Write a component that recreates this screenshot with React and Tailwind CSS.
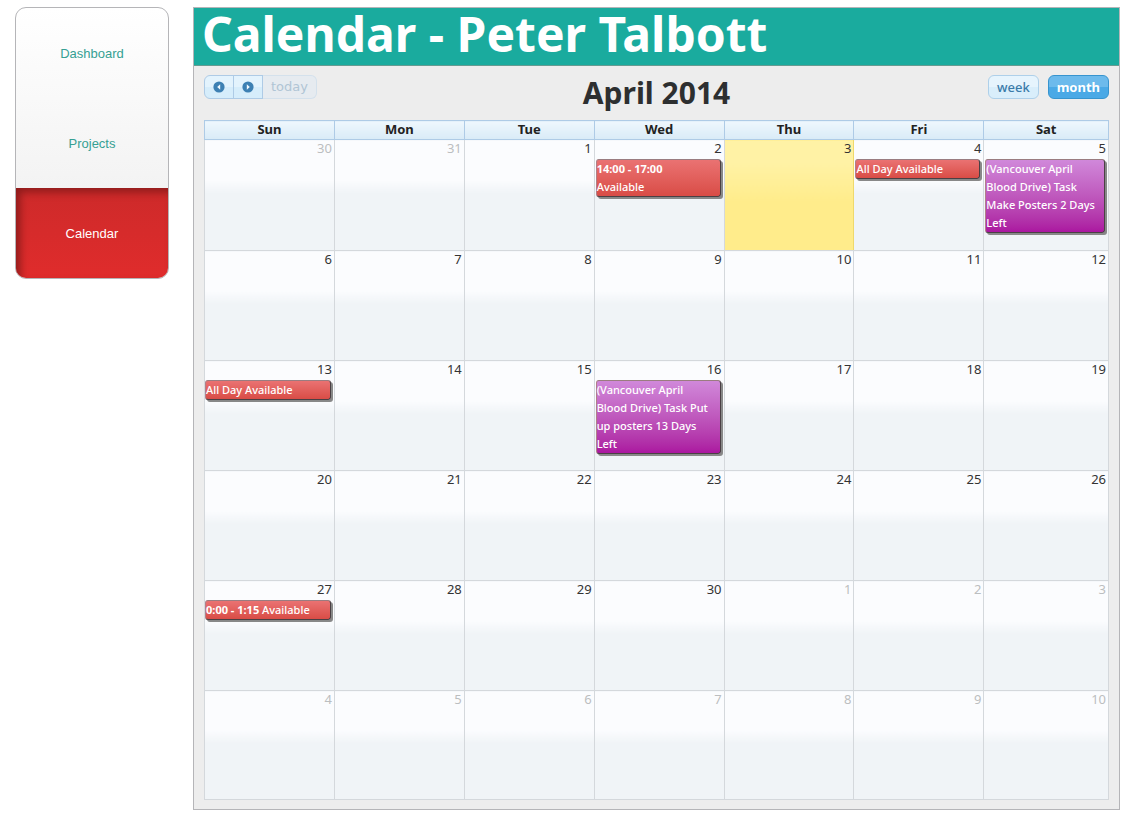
import { Fragment } from 'react';

const days = ['Sun', 'Mon', 'Tue', 'Wed', 'Thu', 'Fri', 'Sat'];

const weeks = [
  [30, 31, 1, 2, 3, 4, 5],
  [6, 7, 8, 9, 10, 11, 12],
  [13, 14, 15, 16, 17, 18, 19],
  [20, 21, 22, 23, 24, 25, 26],
  [27, 28, 29, 30, 1, 2, 3],
  [4, 5, 6, 7, 8, 9, 10],
];

const events = {
  '0-3': { kind: 'available', time: '14:00 - 17:00', lines: ['', 'Available'] },
  '0-5': { kind: 'available', lines: ['All Day Available'] },
  '0-6': { kind: 'task', lines: ['(Vancouver April', 'Blood Drive) Task', 'Make Posters 2 Days', 'Left'] },
  '2-0': { kind: 'available', lines: ['All Day Available'] },
  '2-3': { kind: 'task', lines: ['(Vancouver April', 'Blood Drive) Task Put', 'up posters 13 Days', 'Left'] },
  '4-0': { kind: 'available', time: '0:00 - 1:15', lines: ['Available'] },
};

const eventColors = {
  available: 'from-[#ea7272] to-[#d94c46]',
  task: 'from-[#d088da] to-[#ab16a0]',
};

function isOtherMonth(week, day) {
  return (week === 0 && day > 20) || (week > 3 && day < 20);
}

function NavLink({ label, active }) {
  return (
    <a
      href="#"
      aria-current={active ? 'page' : undefined}
      className={
        active
          ? 'flex h-[90px] items-center justify-center bg-linear-to-b from-[#cd2a2a] to-[#e02c2c] pt-[2px] text-white shadow-[inset_5px_5px_8px_-1px_#8c1b1b]'
          : 'flex h-[90px] items-center justify-center pt-[2px] text-[#36a093]'
      }
    >
      {label}
    </a>
  );
}

function CircleArrow({ left }) {
  return (
    <svg viewBox="0 0 12 12" className="size-3" aria-hidden="true">
      <circle cx="6" cy="6" r="5.6" fill="#3d80b3" />
      <path d={left ? 'M7.2 3.2 L4.2 6 L7.2 8.8 Z' : 'M4.8 3.2 L7.8 6 L4.8 8.8 Z'} fill="#f2f9ff" />
    </svg>
  );
}

function EventCard({ event, firstColumn }) {
  return (
    <div
      className={`mr-[3px] rounded-[3px] border border-t-[#9a7c80] border-l-[#b08088] border-r-[#4a4044] border-b-[#4a4044] bg-linear-to-b text-left text-[11px] leading-[18px] font-medium text-white shadow-[2px_2px_0_#888] ${eventColors[event.kind]} ${firstColumn ? '' : 'ml-px'}`}
    >
      {event.time && <span className="font-bold">{event.time} </span>}
      {event.lines.map((line, i) => (
        <Fragment key={i}>
          {i > 0 && <br />}
          {line}
        </Fragment>
      ))}
    </div>
  );
}

export default function App() {
  return (
    <div className="flex items-start gap-6 bg-white pt-[7px] pr-[22px] pb-[9px] pl-[15px] font-['Noto_Sans',sans-serif]">
      <nav className="w-[154px] shrink-0 overflow-hidden rounded-[11px] border border-[#b5b5b8] bg-linear-to-b from-white to-[#f3f3f3] to-67% font-['Liberation_Sans',sans-serif] text-[13px]">
        <NavLink label="Dashboard" />
        <NavLink label="Projects" />
        <NavLink label="Calendar" active />
      </nav>

      <main className="min-w-0 flex-1 border border-[#b5b5b8] bg-[#ededed]">
        <h1 className="h-[58px] border-b border-[#669b91] bg-[#1aab9e] pl-2 text-[48px] leading-[52px] font-bold whitespace-nowrap text-white">
          Calendar - Peter Talbott
        </h1>

        <section className="px-[10px] pt-[9px] pb-[9px]">
          <header className="grid h-[45px] grid-cols-[1fr_auto_1fr] items-start">
            <div className="flex h-6">
              <button
                aria-label="Previous month"
                className="flex w-[30px] items-center justify-center rounded-l-[6px] border border-[#aecbe6] bg-linear-to-b from-[#e3f3fd] from-50% to-[#d6edfb] to-50%"
              >
                <CircleArrow left />
              </button>
              <button
                aria-label="Next month"
                className="-ml-px flex w-[30px] items-center justify-center border border-[#aecbe6] bg-linear-to-b from-[#e3f3fd] from-50% to-[#d6edfb] to-50%"
              >
                <CircleArrow />
              </button>
              <button
                disabled
                className="rounded-r-[6px] border border-l-0 border-[#d4e1ec] bg-[#e6ebf0] px-2 font-['DejaVu_Sans',sans-serif] text-[13px] leading-[20px] text-[#b0c5d5]"
              >
                today
              </button>
            </div>
            <h2 className="text-[30px] leading-[36px] font-bold text-[#2d2f30]">April 2014</h2>
            <div className="flex h-6 justify-end gap-[9px] text-[13px] leading-[20px]">
              <button className="rounded-[6px] border border-[#aed0ea] bg-linear-to-b from-[#e6f4fd] from-50% to-[#d9eefb] to-50% px-2 font-medium text-[#3b7ba9]">
                week
              </button>
              <button className="rounded-[6px] border border-[#3694cf] bg-linear-to-b from-[#6cbaec] from-50% to-[#4aa9e6] to-50% px-2 font-bold text-white">
                month
              </button>
            </div>
          </header>

          <table className="w-full table-fixed border-collapse">
            <colgroup>
              <col className="w-[14.37%]" span={6} />
              <col />
            </colgroup>
            <thead>
              <tr className="h-[19px]">
                {days.map((day) => (
                  <th
                    key={day}
                    className="border border-[#aecbe6] bg-linear-to-b from-[#eef7fd] to-[#d9ebf7] p-0 pb-[2px] text-[13px] leading-[16px] font-bold text-[#222]"
                  >
                    {day}
                  </th>
                ))}
              </tr>
            </thead>
            <tbody>
              {weeks.map((week, w) => (
                <tr key={w} className="h-[110px] first:h-[111px] last:h-[109px]">
                  {week.map((day, d) => {
                    const today = w === 0 && d === 4;
                    const event = events[`${w}-${d}`];
                    return (
                      <td
                        key={d}
                        className={`border p-0 align-top ${
                          today
                            ? 'border-x-[#efd96b] border-b-[#d4d8dc] bg-linear-to-b from-[#fff2a5] from-20% to-[#ffec8b] to-55%'
                            : 'border-[#d4d8dc] bg-linear-to-b from-[#fbfcfe] from-36% to-[#f0f4f7] to-48%'
                        }`}
                      >
                        <div
                          className={`pr-[2px] pb-[3px] text-right text-[13px] leading-[16px] ${
                            isOtherMonth(w, day) ? 'text-[#bbbec0]' : 'text-[#333]'
                          }`}
                        >
                          {day}
                        </div>
                        {event && <EventCard event={event} firstColumn={d === 0} />}
                      </td>
                    );
                  })}
                </tr>
              ))}
            </tbody>
          </table>
        </section>
      </main>
    </div>
  );
}
